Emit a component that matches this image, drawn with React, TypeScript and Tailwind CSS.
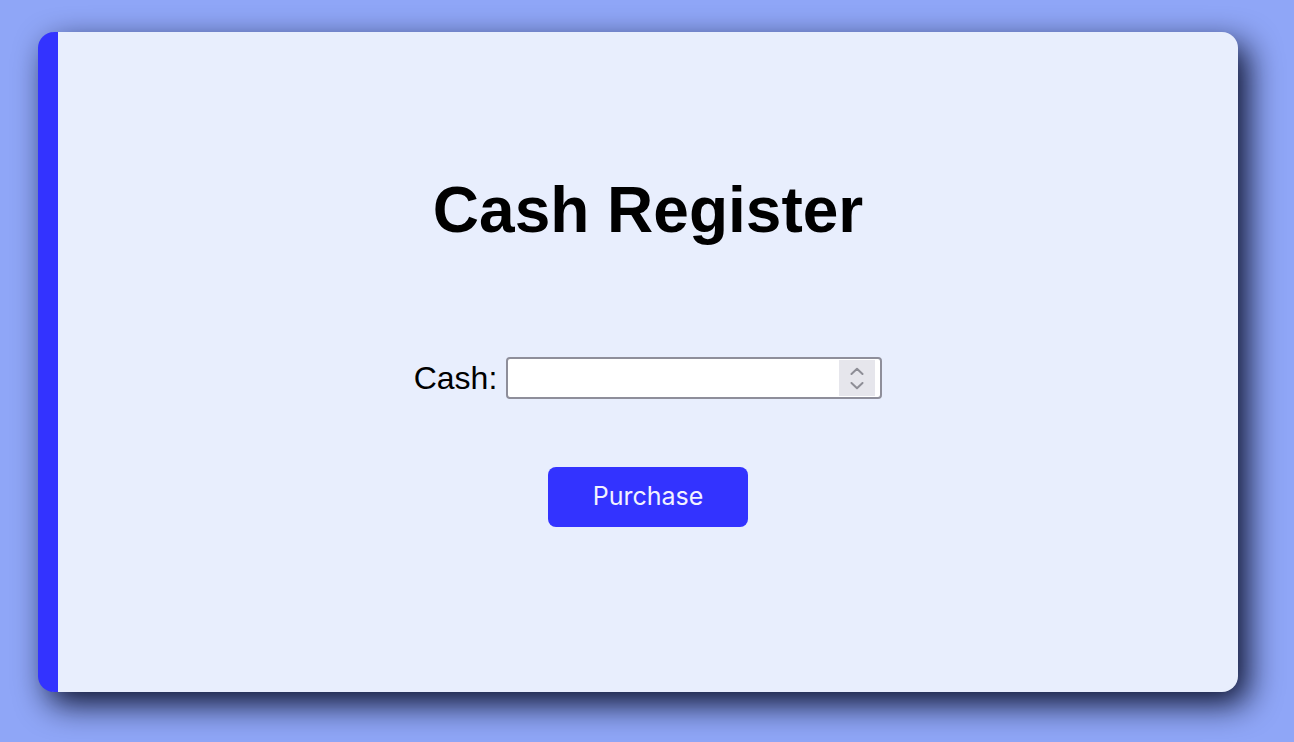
import React from "react";

export default function App() {
  return (
    <div className="w-[1294px] h-[742px] bg-[#8fa6f7] pl-[38px] pt-[32px] overflow-hidden">
      <div className="w-[1200px] h-[660px] rounded-[16px] bg-[#e8eefd] border-l-[20px] border-[#3333ff] shadow-[10px_12px_32px_rgba(5,10,35,0.95)] flex flex-col items-center">
        <h1
          className="mt-[142px] text-[64px] font-bold leading-[72px] text-black"
          style={{ fontFamily: '"Liberation Sans", Arial, sans-serif' }}
        >
          Cash Register
        </h1>
        <div
          className="mt-[111px] flex items-center gap-[9px]"
          style={{ fontFamily: '"Liberation Sans", Arial, sans-serif' }}
        >
          <label className="text-[32px] leading-[40px] text-black" htmlFor="cash">
            Cash:
          </label>
          <div className="relative w-[376px] h-[42px] bg-white border-2 border-[#8e8e9a] rounded-[4px]">
            <input
              id="cash"
              type="text"
              className="w-full h-full bg-transparent outline-none px-2 text-[20px]"
            />
            <div className="absolute right-[5px] top-[1px] w-[36px] h-[36px] bg-[#e6e6ec] flex flex-col items-center justify-center gap-[7px]">
              <svg width="14" height="8" viewBox="0 0 14 8" fill="none">
                <path d="M1.5 7L7 1.8L12.5 7" stroke="#8e8e96" strokeWidth="2" strokeLinecap="round" strokeLinejoin="round" />
              </svg>
              <svg width="14" height="8" viewBox="0 0 14 8" fill="none">
                <path d="M1.5 1L7 6.2L12.5 1" stroke="#8e8e96" strokeWidth="2" strokeLinecap="round" strokeLinejoin="round" />
              </svg>
            </div>
          </div>
        </div>
        <button
          className="mt-[68px] w-[200px] h-[60px] rounded-[8px] bg-[#3333ff] text-[#f2f2ff] text-[25px] flex items-center justify-center"
          style={{ fontFamily: 'Inter, "Noto Sans", sans-serif' }}
        >
          Purchase
        </button>
      </div>
    </div>
  );
}
